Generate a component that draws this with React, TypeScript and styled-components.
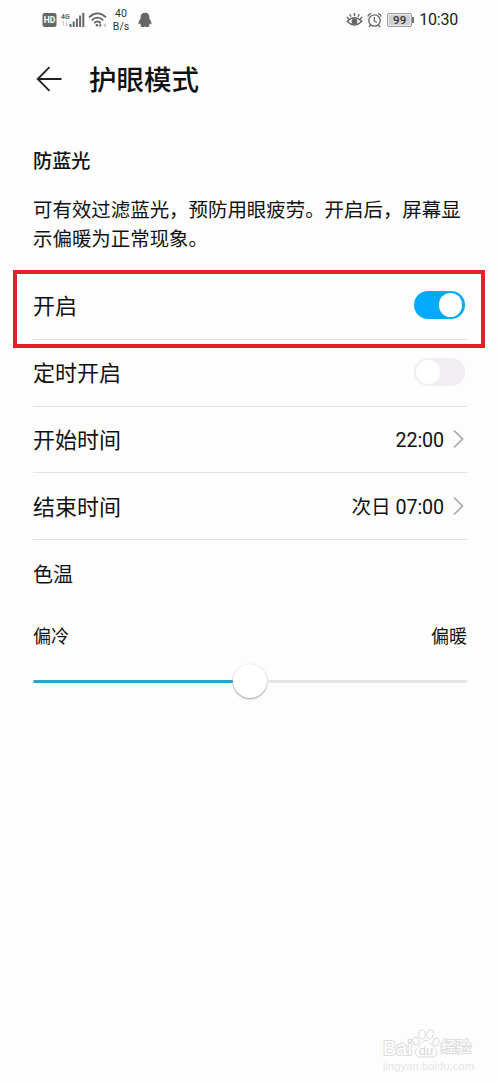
import React from 'react';
import styled, { createGlobalStyle } from 'styled-components';

const GlobalStyle = createGlobalStyle`
  * { box-sizing: border-box; }
  html, body { margin: 0; padding: 0; background: #fdfdfd; }
`;

const Screen = styled.div`
  position: relative;
  width: 500px;
  height: 1084px;
  overflow: hidden;
  background: #fdfdfd;
  color: #111;
  font-family: Roboto, 'Noto Sans CJK SC', sans-serif;
`;

const StatusBar = styled.header`
  display: flex;
  justify-content: space-between;
  height: 40px;
  padding: 0 42px 0 41px;
`;

const StatusGroup = styled.div`
  display: flex;
  align-items: center;
  height: 40px;
`;

const NetSpeed = styled.div`
  width: 20px;
  margin: 1px 7px 0 3px;
  font-size: 10.5px;
  line-height: 12.5px;
  text-align: center;
  white-space: nowrap;
  color: #333;
`;

const Battery = styled.div`
  display: flex;
  align-items: center;
  justify-content: center;
  position: relative;
  width: 25px;
  height: 14px;
  margin: 0 7px 0 5px;
  border: 1px solid #999;
  border-radius: 2px;
  background: #cfcfcf;
  box-shadow: inset 0 0 0 1px #eee;
  font-size: 11.5px;
  font-weight: 500;
  line-height: 12px;
  color: #333;
  &::after {
    content: '';
    position: absolute;
    right: -3px;
    top: 3px;
    width: 2px;
    height: 6px;
    background: #777;
  }
`;

const Clock = styled.span`
  font-size: 16px;
  line-height: 20px;
  letter-spacing: -0.2px;
  color: #222;
`;

const TitleBar = styled.div`
  display: flex;
  align-items: center;
  height: 77px;
  padding-left: 36px;
`;

const Title = styled.h1`
  margin: 5px 0 0 27px;
  font-size: 27.5px;
  font-weight: 500;
  line-height: 40px;
`;

const Content = styled.main`
  padding: 31px 33px 0;
`;

const SectionTitle = styled.h2`
  margin: 0;
  font-size: 19.2px;
  font-weight: 500;
  line-height: 28px;
`;

const Description = styled.p`
  width: 440px;
  margin: 21px 0 19px;
  font-size: 19.45px;
  line-height: 28.5px;
`;

const Row = styled.div<{ $divided?: boolean }>`
  position: relative;
  display: flex;
  align-items: center;
  justify-content: space-between;
  height: 66.8px;
  border-bottom: 1px solid ${(p) => (p.$divided ? '#e3e3e3' : 'transparent')};
`;

const Highlight = styled.div`
  position: absolute;
  left: -20px;
  top: -3px;
  width: 472px;
  height: 77.5px;
  border: 4px solid #e5202a;
  pointer-events: none;
`;

const RowLabel = styled.span`
  padding-top: 3px;
  font-size: 22px;
  line-height: 32px;
`;

const RowValue = styled.span`
  display: flex;
  align-items: center;
  font-size: 19.7px;
  line-height: 30px;
`;

const ValueText = styled.span`
  padding-top: 3px;
  letter-spacing: -0.1px;
`;

const Switch = styled.span<{ $on?: boolean }>`
  display: flex;
  align-items: center;
  justify-content: ${(p) => (p.$on ? 'flex-end' : 'flex-start')};
  width: 51px;
  height: 28px;
  margin: 0 2.5px 1.5px 0;
  padding: 0 2.5px;
  border-radius: 14px;
  background: ${(p) => (p.$on ? '#03a9fb' : '#f0eef1')};
`;

const Knob = styled.span`
  width: 23.5px;
  height: 23.5px;
  border-radius: 50%;
  background: #fff;
`;

const TempLabel = styled.div`
  height: 68px;
  padding-top: 1px;
  font-size: 20px;
  line-height: 68px;
`;

const RangeLabels = styled.div`
  display: flex;
  justify-content: space-between;
  margin-top: 16px;
  font-size: 18px;
  line-height: 26px;
`;

const Slider = styled.div`
  display: flex;
  align-items: center;
  height: 34px;
  margin-top: 14px;
`;

const Track = styled.div<{ $filled?: boolean }>`
  flex: 1;
  height: 3px;
  border-radius: 2px;
  background: ${(p) => (p.$filled ? '#25a5d3' : '#e6e4e6')};
`;

const Thumb = styled.div`
  width: 34px;
  height: 34px;
  border-radius: 50%;
  background: #fff;
  box-shadow: 0 1px 2px rgba(0, 0, 0, 0.38), 0 0 1px rgba(0, 0, 0, 0.1);
`;

const Watermark = styled.div`
  position: absolute;
  left: 383px;
  top: 1027px;
  width: 94px;
  color: #fff;
  font-family: 'Liberation Sans', 'Noto Sans CJK SC', sans-serif;
`;

const Brand = styled.div`
  display: flex;
  align-items: flex-end;
  height: 32px;
  font-size: 20px;
  line-height: 22px;
`;

const BrandText = styled.span`
  paint-order: stroke fill;
  -webkit-text-stroke: 2.2px #dedede;
`;

const BrandCn = styled(BrandText)`
  margin-left: 1px;
  font-size: 15.2px;
  line-height: 24px;
`;

const Site = styled.div`
  font-size: 11.3px;
  line-height: 14px;
  color: #e6e6e6;
`;

const Chevron = () => (
  <svg width="13" height="20" viewBox="0 0 13 20" style={{ marginLeft: 8, marginRight: 2 }} fill="none" stroke="#a8a8a8" strokeWidth="1.7">
    <path d="M2 1.500 10.500 10 2 18.500" />
  </svg>
);

const SignalIcons = () => (
  <svg width="67" height="20" viewBox="41 10 67 20" fill="#666">
    <rect x="42.500" y="13" width="14" height="14" rx="2" />
    <text x="49.500" y="23" textAnchor="middle" fontSize="8.500" fontWeight="700" fill="#fff">HD</text>
    <text x="61" y="18.500" fontSize="7.500" fontWeight="700" textLength="8.500" lengthAdjust="spacingAndGlyphs">4G</text>
    <path d="M63.500 21v5M62 22.500 63.500 21M66.500 21v5M66.500 26 68 24.500" fill="none" stroke="#c4c4c4" strokeWidth=".8" />
    <path d="M69.500 24h2v3h-2zM72.700 21.500h2v5.500h-2zM75.900 18.500h2V27h-2zM79.100 15.500h2V27h-2zM82.300 12.700h2V27h-2z" />
    <g fill="none" stroke="#666" strokeWidth="1.700">
      <path d="M89 17.300Q97.500 9.600 106 17.300" />
      <path d="M91.600 20.300Q97.500 14.800 103.400 20.300" />
      <path d="M94.200 23Q97.500 20 100.800 23" />
    </g>
    <circle cx="97" cy="25.300" r="1.300" />
    <path d="m99.500 23 2.200 2.200-2.200 2.200z" />
    <path d="m105.500 23-2.200 2.200 2.200 2.200z" fill="#bbb" />
  </svg>
);

const PenguinIcon = () => (
  <svg width="14" height="16" viewBox="0 0 14 17" preserveAspectRatio="none" fill="#666">
    <path d="M7 .8C4 .8 2.600 3 2.600 5.800v1.300C1.200 9 .4 10.800.5 12.600c.1.8.8.5 1.500-.6.3.9.7 1.600 1.300 2.200-.7.4-.9.9-.7 1.300.4.8 3.500.6 4.400-.1.9.7 4 .9 4.400.1.2-.4 0-.9-.7-1.300.6-.6 1-1.300 1.300-2.200.7 1.100 1.400 1.400 1.500.6.1-1.800-.7-3.600-2.100-5.500V5.800C11.400 3 10 .8 7 .8Z" />
  </svg>
);

const EyeIcon = () => (
  <svg width="17" height="16" viewBox="0 0 17 16" fill="none" stroke="#666" strokeWidth="1.400">
    <path d="M1.200 9.500Q8.500 2.200 15.800 9.500 8.500 16.500 1.200 9.500ZM8.500 1v3M3.800 2.200l1.200 2.500M13.200 2.200 12 4.700M.8 5.100l2 1.900M16.200 5.100l-2 1.900" />
    <circle cx="8.500" cy="9.400" r="2.200" fill="#666" />
  </svg>
);

const AlarmIcon = () => (
  <svg width="15" height="16" viewBox="0 0 15 16" fill="none" stroke="#666" strokeWidth="1.300" style={{ marginLeft: 4 }}>
    <circle cx="7.500" cy="8.500" r="5.700" />
    <path d="M7.300 5v4l2.500 1.500M.8 4.500Q1.500 2 4 1.300M14.200 4.500Q13.500 2 11 1.300M3.500 13 2 15M11.500 13l1.500 2" />
  </svg>
);

const BackIcon = () => (
  <svg width="26" height="26" viewBox="0 0 26 26" fill="none" stroke="#222" strokeWidth="1.800">
    <path d="M25.500 13H2M13.500 1.200 1.700 13l11.800 11.800" />
  </svg>
);

const PawIcon = () => (
  <svg width="28" height="31" viewBox="0 0 28 31" fill="#fff" stroke="#dadada" strokeWidth="1">
    <ellipse cx="4" cy="13" rx="3" ry="3.800" transform="rotate(-15 4 13)" />
    <ellipse cx="10" cy="6.500" rx="3.200" ry="4.500" />
    <ellipse cx="18" cy="6.500" rx="3.200" ry="4.500" transform="rotate(12 18 6.500)" />
    <ellipse cx="24" cy="14" rx="3" ry="3.800" transform="rotate(15 24 14)" />
    <path d="M14 12.500c-3 0-4 3-6 5s-5 3.500-4.500 7.500c.4 3.500 4 4.500 7 4 2.500-.4 4.500-.4 7 0 3.500.5 7-.5 7.300-4 .2-4-2.800-5-4.800-7.500-1.500-2.500-3-5-6-5Z" />
    <text x="14" y="26.500" textAnchor="middle" fontSize="13" fill="#d6d6d6" stroke="none">du</text>
  </svg>
);

export default function App() {
  return (
    <>
      <GlobalStyle />
      <Screen>
        <StatusBar>
          <StatusGroup>
            <SignalIcons />
            <NetSpeed>40<br />B/s</NetSpeed>
            <PenguinIcon />
          </StatusGroup>
          <StatusGroup>
            <EyeIcon />
            <AlarmIcon />
            <Battery>99</Battery>
            <Clock>10:30</Clock>
          </StatusGroup>
        </StatusBar>
        <TitleBar>
          <BackIcon />
          <Title>护眼模式</Title>
        </TitleBar>
        <Content>
          <SectionTitle>防蓝光</SectionTitle>
          <Description>可有效过滤蓝光，预防用眼疲劳。开启后，屏幕显示偏暖为正常现象。</Description>
          <Row $divided>
            <RowLabel>开启</RowLabel>
            <Switch $on><Knob /></Switch>
            <Highlight />
          </Row>
          <Row $divided>
            <RowLabel>定时开启</RowLabel>
            <Switch><Knob /></Switch>
          </Row>
          <Row $divided>
            <RowLabel>开始时间</RowLabel>
            <RowValue><ValueText>22:00</ValueText><Chevron /></RowValue>
          </Row>
          <Row $divided>
            <RowLabel>结束时间</RowLabel>
            <RowValue><ValueText>次日 07:00</ValueText><Chevron /></RowValue>
          </Row>
          <TempLabel>色温</TempLabel>
          <RangeLabels><span>偏冷</span><span>偏暖</span></RangeLabels>
          <Slider><Track $filled /><Thumb /><Track /></Slider>
        </Content>
        <Watermark>
          <Brand><BrandText>Bai</BrandText><PawIcon /><BrandCn>经验</BrandCn></Brand>
          <Site>jingyan.baidu.com</Site>
        </Watermark>
      </Screen>
    </>
  );
}
